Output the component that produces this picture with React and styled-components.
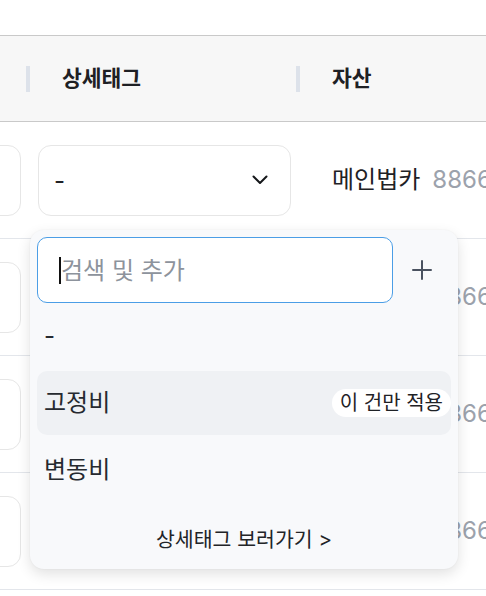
import React from "react";
import styled, { createGlobalStyle } from "styled-components";

const GlobalStyle = createGlobalStyle`
  html, body { margin: 0; padding: 0; background: #ffffff; }
  body {
    font-family: Inter, "Noto Sans CJK KR", "Noto Sans", sans-serif;
    overflow: hidden;
    -webkit-font-smoothing: antialiased;
  }
  * { box-sizing: border-box; }
`;

const Page = styled.div`
  position: relative;
  width: 486px;
  height: 596px;
  overflow: hidden;
  background: #ffffff;
`;

const TopSpace = styled.div`
  height: 35px;
`;

const Table = styled.div`
  margin-left: -120px;
  width: 720px;
`;

const columns = "146px 270px 1fr";

const HeaderRow = styled.div`
  display: grid;
  grid-template-columns: ${columns};
  height: 87px;
  background: #f7f7f7;
  border-top: 1px solid #c9c9c9;
  border-bottom: 1px solid #c9c9c9;
`;

const HeaderCell = styled.div`
  display: flex;
  align-items: center;
  gap: 32px;
  font-size: 21.5px;
  font-weight: 700;
  color: #1e2024;
  line-height: 1.2;
`;

const Divider = styled.span`
  width: 4px;
  height: 26px;
  background: #dde2ea;
`;

const Row = styled.div`
  display: grid;
  grid-template-columns: ${columns};
  height: 117px;
  border-bottom: 1px solid #e3e6eb;
`;

const BoxCell = styled.div`
  display: flex;
  align-items: center;
  padding: 0 5px 0 12px;
`;

const Box = styled.div`
  flex: 1;
  height: 71px;
  border: 1px solid #e6e6e6;
  border-radius: 13px;
  background: #ffffff;
  display: flex;
  align-items: center;
  justify-content: space-between;
  padding: 0 22px 0 15px;
  font-size: 24px;
  color: #1f2226;
`;

const AssetCell = styled.div`
  display: flex;
  align-items: center;
  gap: 12px;
  padding-left: 36px;
  white-space: nowrap;
  font-size: 24px;
  line-height: 1.2;
`;

const AssetName = styled.span`
  color: #1f2226;
`;

const AssetNumber = styled.span`
  color: #9ca2ac;
`;

const Dropdown = styled.div`
  position: absolute;
  left: 30px;
  top: 230px;
  width: 428px;
  padding: 7px;
  background: #f8f9fb;
  border-radius: 14px;
  box-shadow: 0 5px 14px rgba(0, 0, 0, 0.12), 0 0 2px rgba(0, 0, 0, 0.05);
`;

const SearchRow = styled.div`
  display: flex;
  align-items: center;
  height: 66px;
`;

const InputWrap = styled.div`
  position: relative;
  width: 356px;
  height: 66px;
`;

const SearchInput = styled.input`
  width: 100%;
  height: 100%;
  border: 1px solid #4b9ee6;
  border-radius: 10px;
  background: #ffffff;
  padding: 0 16px 0 23px;
  font-family: inherit;
  font-size: 24px;
  color: #1f2226;
  outline: none;
  caret-color: transparent;
  &::placeholder { color: #8d939c; }
`;

const Caret = styled.span`
  position: absolute;
  left: 22px;
  top: 20px;
  width: 2px;
  height: 27px;
  background: #111111;
`;

const AddButton = styled.button`
  flex: 1;
  height: 66px;
  display: flex;
  align-items: center;
  justify-content: center;
  border: none;
  background: transparent;
  padding: 0;
  cursor: pointer;
`;

const OptionList = styled.div`
  margin-top: 1px;
  display: flex;
  flex-direction: column;
  gap: 3px;
`;

const Option = styled.div`
  height: 64px;
  display: flex;
  align-items: center;
  justify-content: space-between;
  padding-left: 7px;
  border-radius: 10px;
  background: ${(p) => (p.$active ? "#eff1f4" : "transparent")};
  font-size: 24px;
  line-height: 1.2;
  color: #262a30;
`;

const Badge = styled.span`
  height: 28px;
  line-height: 28px;
  padding: 0 8px;
  border-radius: 14px;
  background: #ffffff;
  font-size: 20px;
  color: #1f2226;
`;

const Footer = styled.div`
  padding: 28px 0 12px;
  text-align: center;
  font-size: 20.5px;
  line-height: 20px;
  color: #222428;
`;

const Chevron = () => (
  <svg width="16" height="10" viewBox="0 0 16 10" fill="none">
    <polyline points="1.5 1.5 8 8 14.5 1.5" stroke="#15171a" strokeWidth="2" strokeLinecap="round" strokeLinejoin="round" />
  </svg>
);

const Plus = () => (
  <svg width="20" height="20" viewBox="0 0 20 20" fill="none">
    <path d="M10 1v18M1 10h18" stroke="#4a5260" strokeWidth="2" strokeLinecap="round" />
  </svg>
);

const rows = [0, 1, 2, 3];

export default function App() {
  return (
    <Page>
      <GlobalStyle />
      <TopSpace />
      <Table>
        <HeaderRow>
          <HeaderCell />
          <HeaderCell>
            <Divider />
            상세태그
          </HeaderCell>
          <HeaderCell>
            <Divider />
            자산
          </HeaderCell>
        </HeaderRow>
        {rows.map((r) => (
          <Row key={r}>
            <BoxCell>
              <Box />
            </BoxCell>
            <BoxCell>
              <Box>
                <span>-</span>
                <Chevron />
              </Box>
            </BoxCell>
            <AssetCell>
              <AssetName>메인법카</AssetName>
              <AssetNumber>8866</AssetNumber>
            </AssetCell>
          </Row>
        ))}
      </Table>
      <Dropdown>
        <SearchRow>
          <InputWrap>
            <SearchInput placeholder="검색 및 추가" />
            <Caret />
          </InputWrap>
          <AddButton aria-label="추가">
            <Plus />
          </AddButton>
        </SearchRow>
        <OptionList>
          <Option>-</Option>
          <Option $active>
            고정비
            <Badge>이 건만 적용</Badge>
          </Option>
          <Option>변동비</Option>
        </OptionList>
        <Footer>상세태그 보러가기 &gt;</Footer>
      </Dropdown>
    </Page>
  );
}
